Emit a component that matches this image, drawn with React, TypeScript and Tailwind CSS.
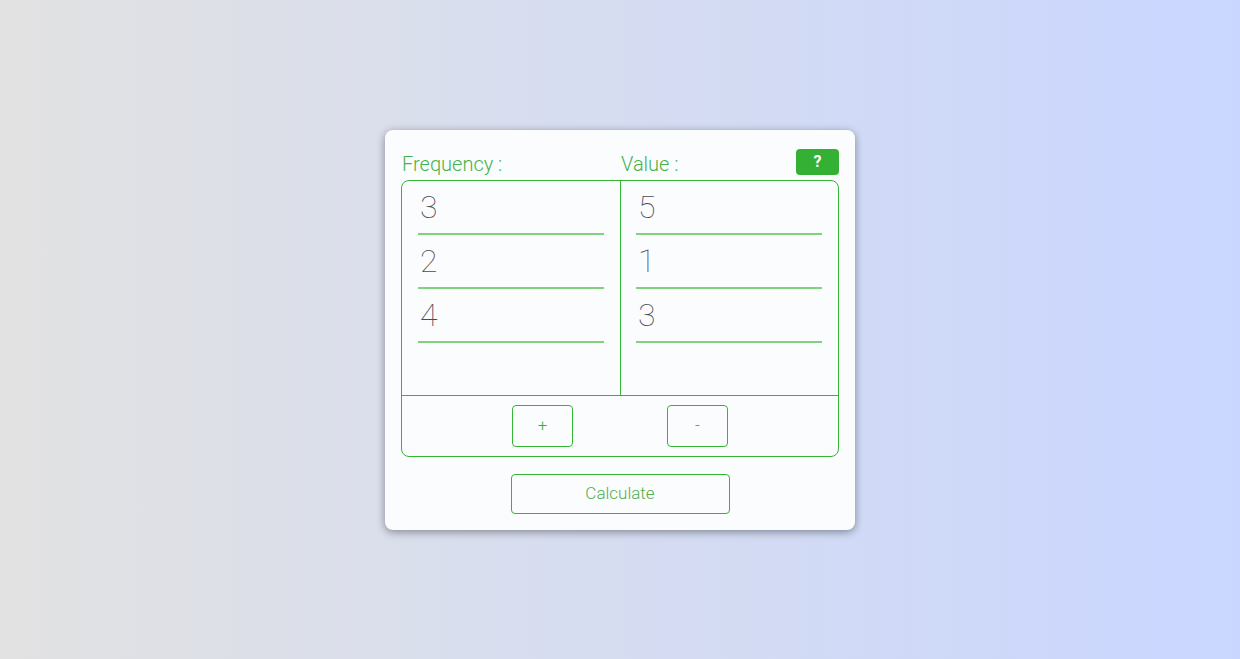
const freqs = ["3", "2", "4"];
const values = ["5", "1", "3"];

function Column({ items, divider }: { items: string[]; divider?: boolean }) {
  return (
    <div className={`flex h-[214px] flex-col pr-4 ${divider ? "border-l border-[#34b534] pl-[15px]" : "pl-4"}`}>
      {items.map((v, i) => (
        <input
          key={i}
          defaultValue={v}
          className="h-[54px] w-full border-b-2 border-[#80d27f] bg-transparent pl-[2px] font-['Roboto'] text-[32px] font-thin text-[#4a4a55] outline-none"
        />
      ))}
    </div>
  );
}

export default function App() {
  return (
    <div className="flex min-h-screen items-center justify-center bg-linear-to-r from-[#e2e2e2] to-[#c9d6ff] font-['Roboto',sans-serif]">
      <div className="w-[470px] rounded-lg bg-[#fbfcfe] px-4 pb-4 pt-[19px] shadow-[0_2px_8px_rgba(0,0,0,0.4)]">
        <div className="grid h-[26px] grid-cols-2 px-px">
          <span className="self-end text-[20px] font-light leading-[22px] text-[#45b34c]">Frequency :</span>
          <div className="flex items-end justify-between">
            <span className="pl-px text-[20px] font-light leading-[22px] text-[#45b34c]">Value :</span>
            <button className="-mr-px h-[26px] w-[43px] self-start rounded bg-[#34b134] text-[16px] font-bold text-white">
              ?
            </button>
          </div>
        </div>

        <div className="mt-[5px] rounded-lg border border-[#34b534]">
          <div className="grid grid-cols-2">
            <Column items={freqs} />
            <Column items={values} divider />
          </div>
          <div className="flex justify-center gap-[94px] border-t border-[#34b534] py-[9px]">
            <button className="h-[42px] w-[61px] rounded border border-[#34b534] text-[17px] font-light text-[#3cb03c]">
              +
            </button>
            <button className="h-[42px] w-[61px] rounded border border-[#34b534] text-[17px] font-light text-[#3cb03c]">
              -
            </button>
          </div>
        </div>

        <div className="mt-[17px] flex justify-center">
          <button className="h-10 w-[219px] rounded border border-[#34b534] text-[17px] font-light text-[#4fae50]">
            Calculate
          </button>
        </div>
      </div>
    </div>
  );
}
